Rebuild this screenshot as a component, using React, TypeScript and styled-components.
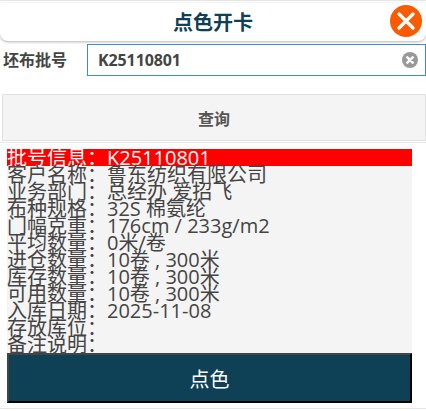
import React from 'react';
import styled, { createGlobalStyle } from 'styled-components';

const GlobalStyle = createGlobalStyle`
  html, body {
    margin: 0;
    padding: 0;
    background: #fff;
  }
  body {
    font-family: "Open Sans", "Noto Sans CJK SC", sans-serif;
    color: #444;
  }
`;

const Page = styled.div`
  width: 426px;
  height: 411px;
  overflow: hidden;
  box-sizing: border-box;
  padding-top: 2px;
  border-top: 1px solid #e4e7ea;
  display: flex;
  flex-direction: column;
`;

const Header = styled.header`
  height: 38px;
  flex: none;
  position: relative;
  display: flex;
  align-items: center;
  justify-content: center;
  padding-bottom: 2px;
  box-sizing: border-box;
  background: #fff;
  border-radius: 0 0 8px 8px;
  box-shadow: 0 1px 3px rgba(0, 0, 0, 0.3);
`;

const Title = styled.h1`
  margin: 0;
  font-size: 20px;
  font-weight: 700;
  color: #0e4155;
`;

const CloseButton = styled.button`
  position: absolute;
  top: 2px;
  right: 4px;
  width: 32px;
  height: 32px;
  padding: 0;
  border: 0;
  background: none;
  display: block;
`;

const SearchRow = styled.div`
  margin-top: 3px;
  height: 32px;
  flex: none;
  display: flex;
  align-items: center;
`;

const FieldLabel = styled.label`
  width: 87px;
  flex: none;
  box-sizing: border-box;
  padding-left: 3px;
  padding-bottom: 2px;
  font-size: 16px;
  font-weight: 700;
`;

const InputBox = styled.div`
  flex: 1;
  height: 32px;
  box-sizing: border-box;
  display: flex;
  align-items: center;
  padding: 0 7px 0 10px;
  border: 1px solid #3d8fc9;
`;

const InputValue = styled.input`
  flex: 1;
  min-width: 0;
  border: 0;
  outline: 0;
  padding: 0;
  background: none;
  font: 700 16px "Open Sans", sans-serif;
  letter-spacing: -0.1px;
  color: #444;
`;

const QueryButton = styled.button`
  margin: 18px 0 0 2px;
  height: 47px;
  flex: none;
  box-sizing: border-box;
  border: 1px solid #e2e2e2;
  background: #f4f4f4;
  font-family: inherit;
  font-size: 16px;
  font-weight: 700;
  color: #555;
  padding: 0;
`;

const Divider = styled.div`
  margin-top: 1px;
  height: 1px;
  flex: none;
  background: #e8e8e8;
`;

const InfoPanel = styled.section`
  margin: 6px 14px 0 7px;
  background: #f4f4f4;
  flex: none;
`;

const InfoLine = styled.div<{ $highlight?: boolean }>`
  height: 17px;
  line-height: 17px;
  font-size: 20px;
  white-space: nowrap;
  display: flex;
  color: ${p => (p.$highlight ? '#fff' : '#444')};
  background: ${p => (p.$highlight ? '#f00' : 'transparent')};
`;

const InfoKey = styled.span`
  width: 100px;
  flex: none;
`;

const ColorButton = styled.button`
  margin: 0 14px 0 7px;
  height: 50px;
  flex: none;
  box-sizing: border-box;
  border-width: 2px;
  border-style: solid;
  border-color: #444 #000 #000 #444;
  background: #0e4155;
  font-family: inherit;
  font-size: 20px;
  color: #fff;
  padding: 0;
`;

const BottomRule = styled.div`
  margin-top: 5px;
  height: 1px;
  flex: none;
  background: #e8e8e8;
`;

const rows: [string, string][] = [
  ['客户名称：', '鲁东纺织有限公司'],
  ['业务部门：', '总经办 爱招飞'],
  ['布种规格：', '32S 棉氨纶'],
  ['门幅克重：', '176cm / 233g/m2'],
  ['平均数量：', '0米/卷'],
  ['进仓数量：', '10卷 , 300米'],
  ['库存数量：', '10卷 , 300米'],
  ['可用数量：', '10卷 , 300米'],
  ['入库日期：', '2025-11-08'],
  ['存放库位：', ''],
  ['备注说明：', ''],
];

const App: React.FC = () => (
  <Page>
    <GlobalStyle />
    <Header>
      <Title>点色开卡</Title>
      <CloseButton aria-label="关闭">
        <svg width="32" height="32" viewBox="0 0 32 32">
          <circle cx="16" cy="16" r="16" fill="#fa5a00" />
          <path d="M9 9 L23 23 M23 9 L9 23" stroke="#fff" strokeWidth="3.4" strokeLinecap="round" />
        </svg>
      </CloseButton>
    </Header>
    <SearchRow>
      <FieldLabel>坯布批号</FieldLabel>
      <InputBox>
        <InputValue defaultValue="K25110801" />
        <svg width="16" height="16" viewBox="0 0 16 16">
          <circle cx="8" cy="8" r="8" fill="#999" />
          <path d="M5.3 5.3 L10.7 10.7 M10.7 5.3 L5.3 10.7" stroke="#fff" strokeWidth="2.4" strokeLinecap="round" />
        </svg>
      </InputBox>
    </SearchRow>
    <QueryButton>查询</QueryButton>
    <Divider />
    <InfoPanel>
      <InfoLine $highlight>
        <InfoKey>批号信息：</InfoKey>
        <span>K25110801</span>
      </InfoLine>
      {rows.map(([key, value]) => (
        <InfoLine key={key}>
          <InfoKey>{key}</InfoKey>
          <span>{value}</span>
        </InfoLine>
      ))}
    </InfoPanel>
    <ColorButton>点色</ColorButton>
    <BottomRule />
  </Page>
);

export default App;
